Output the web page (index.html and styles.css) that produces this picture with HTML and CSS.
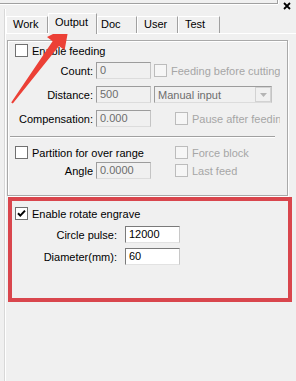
FILE: index.html
```html
<!DOCTYPE html>
<html>
<head>
<meta charset="utf-8">
<link rel="stylesheet" href="styles.css">
</head>
<body>
<div class="top">
  <div class="stub"></div>
  <svg class="close" width="8" height="8" viewBox="0 0 8 8"><path d="M1 1L7 7M7 1L1 7" stroke="#000" stroke-width="1.8" fill="none"/></svg>
</div>
<div class="frame">
  <div class="tabs">
    <div class="tab t-work">Work</div>
    <div class="tab t-output active">Output</div>
    <div class="tab t-doc">Doc</div>
    <div class="tab t-user">User</div>
    <div class="tab t-test">Test</div>
  </div>
  <div class="page">
    <div class="group">
      <div class="chk-row">
        <span class="cb"></span><span>Enable feeding</span>
      </div>
      <div class="field r-count">
        <span class="lbl">Count:</span>
        <span class="inp">0</span>
        <div class="col3">
          <span class="cb dis"></span><span class="dtext">Feeding before cutting</span>
        </div>
      </div>
      <div class="field r-next">
        <span class="lbl">Distance:</span>
        <span class="inp">500</span>
        <div class="col3">
          <div class="combo">
            <span>Manual input</span>
            <span class="drop"><svg width="7" height="4" viewBox="0 0 7 4"><path d="M0 0H7L3.5 4Z" fill="#b4b4b4"/></svg></span>
          </div>
        </div>
      </div>
      <div class="field r-next">
        <span class="lbl">Compensation:</span>
        <span class="inp">0.000</span>
        <div class="col3 indent">
          <span class="cb dis"></span><span class="dtext">Pause after feeding</span>
        </div>
      </div>
      <div class="sep"></div>
      <div class="prow">
        <div class="pcol">
          <span class="cb"></span><span>Partition for over range</span>
        </div>
        <div class="pcol2">
          <span class="cb dis"></span><span class="dtext">Force block</span>
        </div>
      </div>
      <div class="field r-angle">
        <span class="lbl">Angle</span>
        <span class="inp">0.0000</span>
        <div class="col3 indent">
          <span class="cb dis"></span><span class="dtext">Last feed</span>
        </div>
      </div>
    </div>
    <div class="rotate">
      <div class="chk-row rchk">
        <span class="cb"><svg width="11" height="11" viewBox="0 0 11 11"><path d="M2 5.2L4.3 7.6L9 2.6" stroke="#000" stroke-width="2" fill="none"/></svg></span><span>Enable rotate engrave</span>
      </div>
      <div class="rfield">
        <span class="rlbl">Circle pulse:</span>
        <span class="inp on">12000</span>
      </div>
      <div class="rfield r2">
        <span class="rlbl">Diameter(mm):</span>
        <span class="inp on">60</span>
      </div>
    </div>
  </div>
</div>
<svg class="arrow" width="296" height="381" viewBox="0 0 296 381">
  <polygon points="69,26 64.6,50.2 59,46 12.8,103.6 11.2,102.4 52.6,41.2 47,37" fill="#ec4036"/>
</svg>
</body>
</html>
```
FILE: styles.css
```css
* { box-sizing: border-box; }
html, body { margin: 0; padding: 0; }
body {
  background: #f0f0f0;
  font-family: "Liberation Sans", Arial, sans-serif;
  font-size: 11px;
  color: #000;
  width: 296px;
  height: 381px;
  overflow: hidden;
  position: relative;
}
.top { height: 9px; display: flex; }
.stub {
  width: 278px;
  height: 4px;
  border-bottom: 1px solid #a0a0a0;
  border-right: 1px solid #a0a0a0;
  box-shadow: 0 1px 0 #fff, 1px 0 0 #fff;
}
.close { margin: 2px 0 0 5px; display: block; }

.frame {
  margin-left: 5px;
  border-left: 1px solid #fff;
  box-shadow: -1px 0 0 #d8d8d8;
  padding-top: 4px;
  height: 372px;
}
.tabs { display: flex; align-items: flex-end; height: 20px; }
.tab {
  height: 17px;
  border: 1px solid #fff;
  border-bottom: 0;
  border-right-color: #a0a0a0;
  padding-left: 6px;
  line-height: 14px;
  white-space: nowrap;
}
.t-work { width: 42px; }
.t-output { width: 49px; }
.t-doc { width: 40px; padding-left: 3px; }
.t-user { width: 41px; }
.t-test { width: 42px; }
.tab.active {
  height: 21px;
  margin-bottom: -1px;
  position: relative;
  z-index: 1;
  background: #f0f0f0;
  line-height: 16px;
}
.page { border-top: 1px solid #fff; padding-top: 6px; }

.group {
  margin-left: 1px;
  width: 281px;
  border: 1px solid #a9a9a9;
  box-shadow: inset 1px 1px 0 #fff, 1px 1px 0 #fff;
  padding: 3px 0 16px 0;
}
.chk-row { display: flex; align-items: center; height: 13px; padding-left: 7px; gap: 4px; }
.cb {
  width: 13px;
  height: 13px;
  flex: none;
  border: 1px solid #707070;
  background: #fff;
  display: block;
}
.cb svg { display: block; }
.cb.dis { border-color: #bcbcbc; background: #f6f6f6; }
.dtext { color: #a6a6a6; }

.field { display: flex; align-items: center; height: 17px; }
.r-count { margin-top: 5px; }
.r-next { margin-top: 7px; }
.r-angle { margin-top: 3px; }
.lbl { width: 85px; text-align: right; flex: none; }
.inp {
  width: 55px;
  height: 17px;
  flex: none;
  margin-left: 3px;
  padding-left: 3px;
  line-height: 15px;
  color: #6d6d6d;
  background: #f0f0f0;
  border: 1px solid;
  border-color: #9c9c9c #c4c4c4 #dcdcdc #9c9c9c;
}
.col3 {
  width: 126px;
  margin-left: 3px;
  display: flex;
  align-items: center;
  gap: 4px;
  overflow: hidden;
  white-space: nowrap;
  flex: none;
}
.col3.indent { padding-left: 21px; }
.combo {
  width: 118px;
  height: 17px;
  display: flex;
  align-items: center;
  justify-content: space-between;
  color: #6d6d6d;
  padding-left: 3px;
  border: 1px solid;
  border-color: #9c9c9c #c4c4c4 #dcdcdc #9c9c9c;
}
.drop {
  width: 16px;
  height: 15px;
  display: flex;
  align-items: center;
  justify-content: center;
  border: 1px solid #d2d2d2;
  background: #f0f0f0;
}
.drop svg { display: block; }
.sep {
  margin: 9px 0 0 2px;
  width: 265px;
  height: 2px;
  border-top: 1px solid #a0a0a0;
  border-bottom: 1px solid #fff;
}
.prow { display: flex; align-items: center; height: 13px; margin-top: 8px; padding-left: 7px; }
.pcol { width: 160px; display: flex; align-items: center; gap: 4px; flex: none; }
.pcol2 { display: flex; align-items: center; gap: 4px; }

.rotate {
  margin: 1px 0 0 2px;
  width: 284px;
  height: 105px;
  border: 4px solid #d9464d;
  padding: 6px 0 0 3px;
}
.rchk { padding-left: 0; }
.rfield { display: flex; align-items: center; height: 17px; margin-top: 6px; }
.rfield.r2 { margin-top: 5px; }
.rlbl { width: 102px; text-align: right; flex: none; }
.inp.on {
  margin-left: 8px;
  background: #fff;
  color: #000;
  border-color: #7a7a7a #c8c8c8 #e2e2e2 #7a7a7a;
}
.arrow { position: absolute; left: 0; top: 0; pointer-events: none; }
```
